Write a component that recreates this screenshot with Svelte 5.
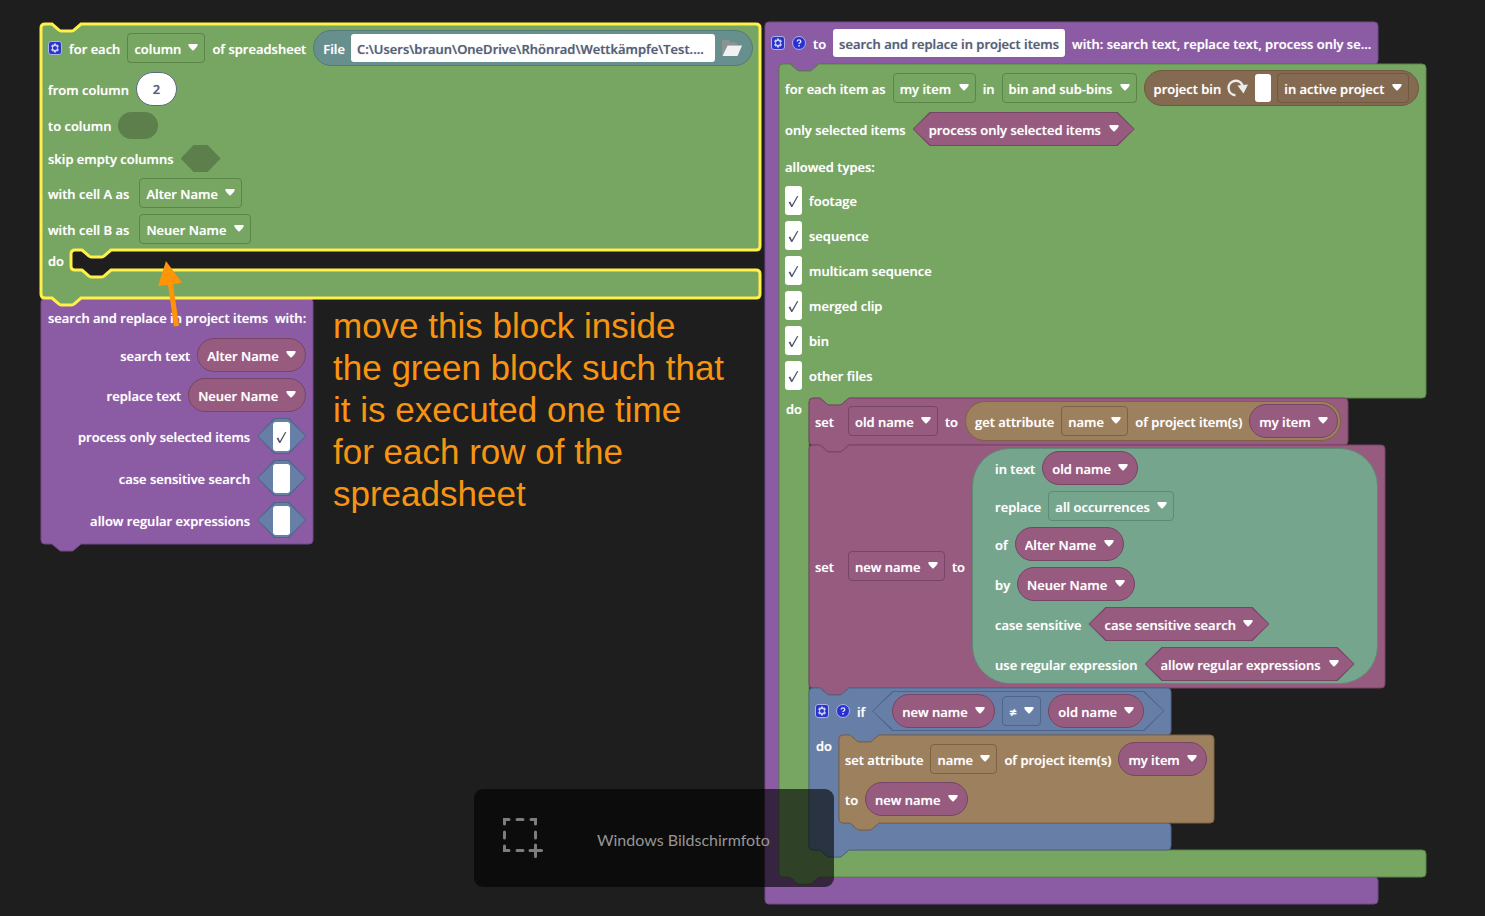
<script>
  const INDENT = 30;

  let loop = $state({ w: 0, head: 0, mouth: 0, foot: 0 });
  let call = $state({ w: 0, head: 0 });
  let proc = $state({ w: 0, head: 0, mouth: 0, foot: 0 });
  let items = $state({ w: 0, head: 0, mouth: 0, foot: 0 });
  let setOld = $state({ w: 0, head: 0 });
  let setNew = $state({ w: 0, head: 0 });
  let cond = $state({ w: 0, head: 0, mouth: 0, foot: 0 });
  let attr = $state({ w: 0, head: 0 });

  const notchRight = 'h7l7 6q1 1 2 1h11q1 0 2-1l7-6';
  const notchLeft = 'l-7 6q-1 1-2 1h-11q-1 0-2-1l-7-6';

  /* Outline of a block; a mouth height turns it into a C shape. */
  function outline({ w, head, mouth, foot }, indent = INDENT, top = true, tab = true) {
    if (!w) return '';
    let d = 'M0 4q0-4 4-4' + (top ? notchRight : '') + `H${w - 4}q4 0 4 4V${head - 4}q0 4-4 4`;
    let end = head;
    if (mouth !== undefined) {
      const low = head + mouth;
      end = low + foot;
      d += `H${indent + 40}${notchLeft}H${indent + 4}q-4 0-4 4V${low - 4}q0 4 4 4${notchRight}`;
      d += `H${w - 4}q4 0 4 4V${end - 4}q0 4-4 4`;
    }
    if (tab) d += `H40${notchLeft}`;
    return d + `H4q-4 0-4-4z`;
  }

  const types = ['footage', 'sequence', 'multicam sequence', 'merged clip', 'bin', 'other files'];
  const flags = [
    { name: 'process only selected items', on: true },
    { name: 'case sensitive search', on: false },
    { name: 'allow regular expressions', on: false }
  ];
</script>

{#snippet shape(d)}
  <svg class="shape" width="1" height="1" aria-hidden="true"><path {d} /></svg>
{/snippet}

{#snippet word(text)}<span class="word">{text}</span>{/snippet}

{#snippet pick(value, label, kind = 'box')}
  <span class="pick {kind}">
    <select aria-label={label}><option>{value}</option></select>
    <svg class="caret" width="10" height="7" viewBox="0 0 10 7" aria-hidden="true">
      <path d="M.4 1.5Q-.1 0 1.3 0h7.4q1.4 0 .9 1.5Q9 3 5.7 6.2 5 6.9 4.3 6.2 1 3 .4 1.5z" />
    </svg>
  </span>
{/snippet}

{#snippet tick(on, id)}
  <span class="tick">
    <input type="checkbox" {id} checked={on} />
    <svg width="17" height="29" viewBox="0 0 17 29" aria-hidden="true">
      <path d="M3.6 16.2l1.7-.7 1.6 3.4 5.2-9 1.2.3-6 10.9H6.2z" />
    </svg>
  </span>
{/snippet}

{#snippet gear()}
  <button class="icon" aria-label="settings">
    <svg width="14" height="14" viewBox="0 0 14 14">
      <rect x=".5" y=".5" width="13" height="13" rx="2.5" fill="#2a35c8" stroke="#a9b2ee" />
      <path d="M6 2.6h2l.3 1.4 1.500-.5 1.100 1.900-1.100 1v1.200l1.100 1-1.100 1.900-1.500-.5L8 11.400H6L5.700 10l-1.500.5-1.100-1.900 1.100-1V6.400l-1.100-1 1.100-1.900 1.500.5z" fill="#c9cff8" />
      <circle cx="7" cy="7" r="2" fill="#2a35c8" />
    </svg>
  </button>
{/snippet}

{#snippet help()}
  <button class="icon" aria-label="?">
    <svg width="14" height="14" viewBox="0 0 14 14">
      <circle cx="7" cy="7" r="6.5" fill="#2a2fd0" stroke="#a9b2ee" />
      <path d="M5.2 5.6Q5.2 3.900 7 3.900t1.800 1.500Q8.800 6.300 7.800 6.800 7 7.200 7 8" fill="none" stroke="#dde0ff" stroke-width="1.400" />
      <rect x="6.200" y="9" width="1.600" height="1.500" fill="#dde0ff" />
    </svg>
  </button>
{/snippet}

<main class="canvas">
  <section class="stack left">
    <div class="block green selected">
      {@render shape(outline(loop))}
      <div class="head" bind:offsetWidth={loop.w} bind:offsetHeight={loop.head}>
        <div class="row tall">
          {@render gear()}
          {@render word('for each')}
          {@render pick('column', 'for each')}
          {@render word('of spreadsheet')}
          <span class="pill file">
            <label class="word" for="path">File</label>
            <input id="path" class="field path" value="C:\Users\braun\OneDrive\Rhönrad\Wettkämpfe\Test...." />
            <button class="icon" aria-label="File">
              <svg width="22" height="18" viewBox="0 0 22 18">
                <path d="M1 2q0-1 1-1h5.500l2 2.500H15q1 0 1 1V6H6L1.500 16H1z" fill="#8f9293" />
                <path d="M6.500 6.500H21L16.500 17H1.500z" fill="#f1f1f1" />
              </svg>
            </button>
          </span>
        </div>
        <div class="row pillrow">
          <label class="word" for="from">from column</label>
          <input id="from" class="number" value="2" />
        </div>
        <div class="row slotrow">{@render word('to column')}<span class="slot"></span></div>
        <div class="row slotrow">{@render word('skip empty columns')}<span class="slot six"></span></div>
        <div class="row wide">{@render word('with cell A as')}{@render pick('Alter Name', 'with cell A as')}</div>
        <div class="row wide">{@render word('with cell B as')}{@render pick('Neuer Name', 'with cell B as')}</div>
      </div>
      <div class="mouth empty" bind:offsetHeight={loop.mouth}><span class="do">do</span></div>
      <div class="foot last" bind:offsetHeight={loop.foot}></div>
    </div>

    <div class="block purple">
      {@render shape(outline(call))}
      <div class="head call" bind:offsetWidth={call.w} bind:offsetHeight={call.head}>
        <div class="row title"><span>search and replace in project items</span><span>with:</span></div>
        <div class="row pillrow">{@render word('search text')}{@render pick('Alter Name', 'search text', 'pill')}</div>
        <div class="row pillrow">{@render word('replace text')}{@render pick('Neuer Name', 'replace text', 'pill')}</div>
        {#each flags as flag, i}
          <div class="row tall">
            <label class="word" for="flag{i}">{flag.name}</label>
            <span class="hex flag">{@render tick(flag.on, `flag${i}`)}</span>
          </div>
        {/each}
      </div>
    </div>
  </section>

  <section class="stack right">
    <div class="block purple">
      {@render shape(outline(proc, 14, false, false))}
      <div class="head" bind:offsetWidth={proc.w} bind:offsetHeight={proc.head}>
        <div class="row fieldrow">
          {@render gear()}
          {@render help()}
          <label class="word" for="name">to</label>
          <input id="name" class="field name" value="search and replace in project items" />
          {@render word('with: search text, replace text, process only se...')}
        </div>
      </div>
      <div class="mouth narrow" bind:offsetHeight={proc.mouth}>
        <div class="block green">
          {@render shape(outline(items))}
          <div class="head list" bind:offsetWidth={items.w} bind:offsetHeight={items.head}>
            <div class="row tall">
              {@render word('for each item as')}
              {@render pick('my item', 'for each item as')}
              {@render word('in')}
              {@render pick('bin and sub-bins', 'in')}
              <span class="pill bin">
                <label class="word" for="bin">project bin</label>
                <button class="icon" aria-label="project bin">
                  <svg width="22" height="20" viewBox="0 0 22 20">
                    <path d="M8.500 17.200A7.200 7.200 0 1 1 15.500 7.500" fill="none" stroke="#ececec" stroke-width="2.400" />
                    <path d="M10.500 7.500l10.500-1-4.500 9z" fill="#ececec" />
                  </svg>
                </button>
                <input id="bin" class="field blank" value="" />
                {@render pick('in active project', 'project bin')}
              </span>
            </div>
            <div class="row pillrow">
              {@render word('only selected items')}
              {@render pick('process only selected items', 'only selected items', 'hex')}
            </div>
            <div class="row types">{@render word('allowed types:')}</div>
            {#each types as name, i}
              <div class="row check">{@render tick(true, `type${i}`)}<label class="word" for="type{i}">{name}</label></div>
            {/each}
          </div>
          <div class="mouth" bind:offsetHeight={items.mouth}>
            <span class="do">do</span>
            <div class="block mauve">
              {@render shape(outline(setOld))}
              <div class="head set" bind:offsetWidth={setOld.w} bind:offsetHeight={setOld.head}>
                <div class="row">
                  <span class="word verb">set</span>
                  {@render pick('old name', 'set')}
                  {@render word('to')}
                  <span class="pill get">
                    {@render word('get attribute')}
                    {@render pick('name', 'get attribute')}
                    {@render word('of project item(s)')}
                    {@render pick('my item', 'of project item(s)', 'pill')}
                  </span>
                </div>
              </div>
            </div>
            <div class="block mauve">
              {@render shape(outline(setNew))}
              <div class="head set" bind:offsetWidth={setNew.w} bind:offsetHeight={setNew.head}>
                <div class="row">
                  <span class="word verb">set</span>
                  {@render pick('new name', 'set')}
                  {@render word('to')}
                  <div class="replace">
                    <div class="row">{@render word('in text')}{@render pick('old name', 'in text', 'pill')}</div>
                    <div class="row">{@render word('replace')}{@render pick('all occurrences', 'replace')}</div>
                    <div class="row">{@render word('of')}{@render pick('Alter Name', 'of', 'pill')}</div>
                    <div class="row">{@render word('by')}{@render pick('Neuer Name', 'by', 'pill')}</div>
                    <div class="row">{@render word('case sensitive')}{@render pick('case sensitive search', 'case sensitive', 'hex')}</div>
                    <div class="row">{@render word('use regular expression')}{@render pick('allow regular expressions', 'use regular expression', 'hex')}</div>
                  </div>
                </div>
              </div>
            </div>
            <div class="block blue">
              {@render shape(outline(cond))}
              <div class="head set" bind:offsetWidth={cond.w} bind:offsetHeight={cond.head}>
                <div class="row">
                  {@render gear()}
                  {@render help()}
                  {@render word('if')}
                  <span class="hex compare">
                    {@render pick('new name', 'if', 'pill')}
                    {@render pick('≠', '≠')}
                    {@render pick('old name', 'if', 'pill')}
                  </span>
                </div>
              </div>
              <div class="mouth" bind:offsetHeight={cond.mouth}>
                <span class="do">do</span>
                <div class="block tan">
                  {@render shape(outline(attr))}
                  <div class="head even" bind:offsetWidth={attr.w} bind:offsetHeight={attr.head}>
                    <div class="row">
                      {@render word('set attribute')}
                      {@render pick('name', 'set attribute')}
                      {@render word('of project item(s)')}
                      {@render pick('my item', 'of project item(s)', 'pill')}
                    </div>
                    <div class="row">{@render word('to')}{@render pick('new name', 'to', 'pill')}</div>
                  </div>
                </div>
              </div>
              <div class="foot" bind:offsetHeight={cond.foot}></div>
            </div>
          </div>
          <div class="foot" bind:offsetHeight={items.foot}></div>
        </div>
      </div>
      <div class="foot" bind:offsetHeight={proc.foot}></div>
    </div>
  </section>

  <svg class="arrow" width="24" height="68" viewBox="0 0 24 68" aria-hidden="true">
    <path d="M8 1L0 26l10-1 6 41.500 5-.7-6-41.500 9-1.500z" />
  </svg>
  <p class="note">move this block inside<br />the green block such that<br />it is executed one time<br />for each row of the<br />spreadsheet</p>

  <aside class="toast">
    <svg width="42" height="42" viewBox="0 0 42 42" aria-hidden="true">
      <path d="M2.500 7V2.500H7M15 2.500h6M29 2.500h4.500V7M2.500 15v6M33.500 15v6M2.500 29v4.500H7M15 33.500h6M33.500 28v11.500M28 33.500h11.500" />
    </svg>
    <span>Windows Bildschirmfoto</span>
  </aside>
</main>

<style>
  :global(body) {
    margin: 0;
    background: #1e1e1e;
  }
  .canvas {
    position: relative;
    min-height: 100vh;
    overflow: hidden;
    background: #1e1e1e;
    color: #fff;
    font: 600 13px/20px 'Open Sans', 'Noto Sans', sans-serif;
    white-space: nowrap;
  }
  .stack {
    position: absolute;
    display: flex;
    flex-direction: column;
    align-items: flex-start;
    text-shadow: 0 0 1px rgba(255, 255, 255, 0.6);
  }
  .left { left: 41px; top: 24px; }
  .right { left: 765px; top: 22px; }

  .green { --fill: #77a562; --line: #5a8546; }
  .purple { --fill: #8b5ba4; --line: #74498b; }
  .mauve { --fill: #965b7f; --line: #774565; }
  .blue { --fill: #677fa6; --line: #4e658a; }
  .tan { --fill: #9d805e; --line: #7c6345; }

  .block {
    position: relative;
    isolation: isolate;
    display: flex;
    flex-direction: column;
    align-items: flex-start;
  }
  .shape {
    position: absolute;
    left: 0;
    top: 0;
    z-index: -1;
    overflow: visible;
  }
  .shape path { fill: var(--fill); stroke: var(--line); }
  .selected > .shape path { stroke: #fff04a; stroke-width: 3px; }
  .selected { z-index: 1; }

  .head {
    display: flex;
    flex-direction: column;
    gap: 6px;
    padding: 6px 7px;
  }
  .right .head { padding-left: 6px; }
  .list { padding-bottom: 8px; }
  .call { align-items: flex-end; }
  .set { padding: 3px 7px 4px; }
  .even { padding: 7px; }
  .row { display: flex; align-items: center; gap: 7px; }
  .word { padding-top: 1px; }
  .tall { height: 36px; }
  .pillrow { height: 34px; }
  .slotrow { height: 27px; }
  .fieldrow { height: 30px; }
  .types { height: 28px; }
  .title { height: 28px; }
  .check { height: 29px; }
  .wide { gap: 10px; }
  .verb { margin-right: 7px; }
  .mouth { position: relative; padding-left: 30px; }
  .right .mouth { padding-left: 30px; }
  .right .narrow { padding-left: 14px; }
  .empty { height: 20px; }
  .do { position: absolute; left: 7px; top: 1px; }
  .foot { height: 27px; }
  .last { height: 28px; }

  .pick {
    display: inline-flex;
    align-items: center;
    gap: 7px;
    box-sizing: border-box;
    height: 30px;
    padding: 0 6px;
    border: 1px solid var(--line);
    border-radius: 4px;
  }
  select {
    appearance: none;
    padding: 1px 0 0;
    border: 0;
    background: none;
    color: inherit;
    font: inherit;
    text-shadow: inherit;
    cursor: pointer;
  }
  option { color: #333; }
  .caret { fill: #fff; margin-bottom: 1px; }

  .pill {
    display: inline-flex;
    align-items: center;
    box-sizing: border-box;
    border: 1px solid var(--line);
    border-radius: 20px;
    background: var(--fill);
  }
  .pick.pill, .pick.hex {
    --fill: #965b7f;
    --line: #774565;
    height: 34px;
    padding: 0 9px;
    border-radius: 17px;
  }
  .file { --fill: #678f8e; --line: #54797a; gap: 6px; height: 36px; padding: 0 9px; }
  .bin { --fill: #836a50; --line: #6f5940; gap: 6px; height: 36px; padding: 0 9px; }
  .get { --fill: #9d805e; --line: #7c6345; gap: 7px; height: 40px; padding: 0 2px 0 9px; }

  .hex {
    position: relative;
    isolation: isolate;
    display: inline-flex;
    align-items: center;
    justify-content: center;
    gap: 7px;
    box-sizing: border-box;
    border: 0;
    --cut: 17px;
  }
  .hex::before, .hex::after {
    content: '';
    position: absolute;
    inset: 0;
    z-index: -2;
    background: var(--line);
    clip-path: polygon(var(--cut) 0, calc(100% - var(--cut)) 0, 100% 50%, calc(100% - var(--cut)) 100%, var(--cut) 100%, 0 50%);
  }
  .hex::after { inset: 1px; z-index: -1; background: var(--fill); }
  .pick.hex { border: 0; padding: 0 16px; }
  .flag { --fill: #677fa6; --line: #4e658a; width: 49px; height: 36px; }
  .compare { --cut: 20px; height: 40px; padding: 0 20px; }

  .replace {
    display: flex;
    flex-direction: column;
    gap: 6px;
    box-sizing: border-box;
    padding: 2px 22px;
    border: 1px solid #5f8a74;
    border-radius: 38px;
    background: #76a58d;
    --line: #5c8a73;
  }

  .slot {
    width: 40px;
    height: 27px;
    border-radius: 14px;
    background: #5c7f4b;
  }
  .six {
    border-radius: 0;
    clip-path: polygon(13px 0, 27px 0, 100% 50%, 27px 100%, 13px 100%, 0 50%);
  }

  input {
    box-sizing: border-box;
    margin: 0;
    color: #575e75;
    font: inherit;
    text-shadow: 0 0 1px rgba(87, 94, 117, 0.6);
  }
  .field {
    height: 28px;
    padding: 1px 6px 0;
    border: 0;
    border-radius: 3px;
    background: #fff;
    text-overflow: ellipsis;
  }
  .path { width: 364px; }
  .name { width: 232px; }
  .blank { width: 16px; padding: 0; }
  .number {
    width: 41px;
    height: 34px;
    border: 1px solid #5b6a80;
    border-radius: 17px;
    background: #fff;
    text-align: center;
  }

  .tick { display: grid; }
  .tick > * { grid-area: 1 / 1; }
  .tick svg { pointer-events: none; fill: #4f566c; }
  .tick input {
    appearance: none;
    width: 17px;
    height: 29px;
    border-radius: 3px;
    background: #fff;
  }
  .tick input:not(:checked) + svg { visibility: hidden; }

  .icon {
    display: block;
    padding: 0;
    border: 0;
    background: none;
    cursor: pointer;
  }
  .icon svg { display: block; }

  .arrow { position: absolute; z-index: 2; left: 158px; top: 260px; fill: #ff9408; }
  .note {
    position: absolute;
    left: 333px;
    top: 305px;
    margin: 0;
    color: #f79512;
    font: 400 35px/42px 'Liberation Sans', Arial, sans-serif;
  }

  .toast {
    position: absolute;
    z-index: 2;
    left: 474px;
    bottom: 29px;
    display: flex;
    align-items: center;
    gap: 53px;
    box-sizing: border-box;
    width: 360px;
    height: 98px;
    padding: 0 28px;
    border-radius: 9px;
    background: rgba(0, 0, 0, 0.6);
    color: #969696;
    font: 400 16px/24px Lato, sans-serif;
  }
  .toast span { padding-top: 3px; }
  .toast svg { fill: none; stroke: #7d7d7d; stroke-width: 3px; stroke-linecap: round; }
</style>
